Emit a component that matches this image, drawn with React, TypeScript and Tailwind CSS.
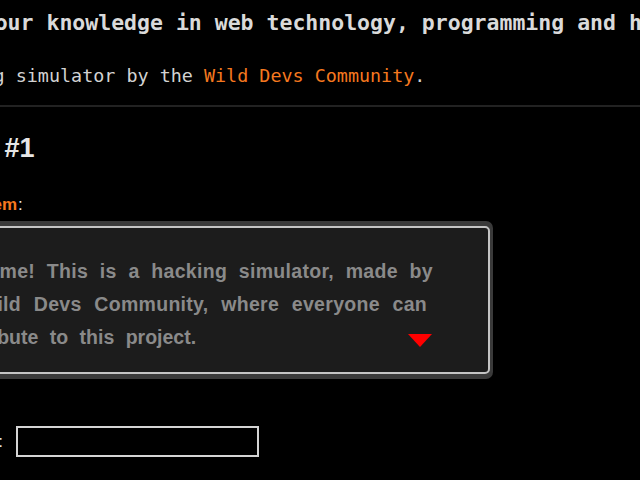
import React from "react";

export default function App() {
  return (
    <div className="w-[640px] h-[480px] overflow-hidden bg-black">
      <div className="pt-[8px]">
        <div
          className="ml-[-83px] whitespace-nowrap text-[21.5px] leading-[30px] font-bold text-[#dadada]"
          style={{ fontFamily: '"DejaVu Sans Mono", monospace' }}
        >
          Test your knowledge in web technology, programming and hacking.
        </div>
        <div
          className="mt-[26px] ml-[-95px] whitespace-nowrap text-[18.4px] leading-[24px] text-[#d2d2d2]"
          style={{ fontFamily: '"DejaVu Sans Mono", monospace' }}
        >
          A hacking simulator by the <span className="text-[#f5781f]">Wild Devs Community</span>.
        </div>
        <div className="mt-[17px] h-[2px] w-full bg-[#222222]" />
        <div className="font-['Liberation_Sans',Arial,sans-serif]">
          <div className="mt-[25px] ml-[-72px] whitespace-nowrap text-[27px] leading-[32px] font-bold text-[#e6e6e6]">
            Level #1
          </div>
          <div className="mt-[29px] ml-[-51px] whitespace-nowrap text-[17px] leading-[24px]">
            <span className="font-bold text-[#f5781f]">Problem</span>
            <span className="ml-[1px] text-[#e6e6e6]">:</span>
          </div>
          <div className="mt-[4px] ml-[-100px] w-[593px] rounded-[7px] bg-[#3a3a3a] pt-[5px] pb-[5px] pl-[5px] pr-[3px]">
            <div className="relative rounded-[5px] border-2 border-[#c4c4c4] bg-[#1c1c1c] pl-[34px] pt-[27px] pb-[18px]">
              <div className="text-[19.5px] leading-[33px] font-bold text-[#8a8a8a] whitespace-nowrap">
                <div className="tracking-[0.3px] [word-spacing:6px]">Welcome! This is a hacking simulator, made by</div>
                <div className="ml-[-5px] tracking-[0.3px] [word-spacing:7px]">the Wild Devs Community, where everyone can</div>
                <div className="ml-[2px] [word-spacing:6px]">contribute to this project.</div>
              </div>
              <div className="absolute right-[56px] bottom-[25px] h-0 w-0 border-l-[12px] border-r-[12px] border-t-[13px] border-l-transparent border-r-transparent border-t-[#ff0000]" />
            </div>
          </div>
          <div className="mt-[47px] flex items-center">
            <span className="ml-[-93px] w-[96px] text-right text-[17px] text-[#e6e6e6] whitespace-nowrap">
              Answer:
            </span>
            <div className="ml-[13px] h-[31px] w-[243px] border-2 border-[#d4d4d4] bg-black" />
          </div>
        </div>
      </div>
    </div>
  );
}
